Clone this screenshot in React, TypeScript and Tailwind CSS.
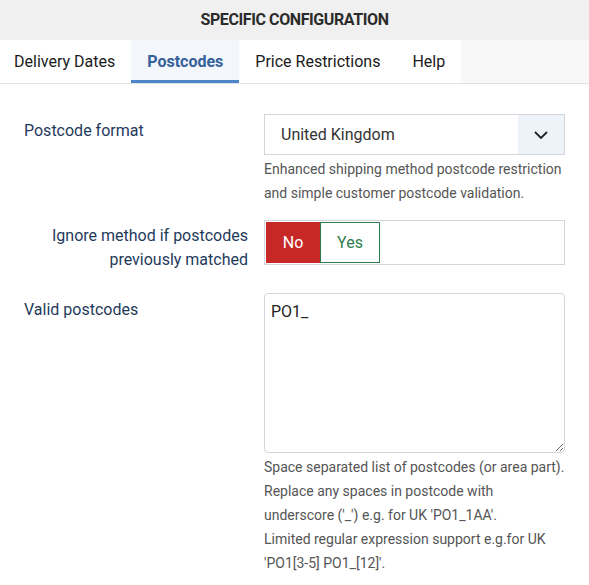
export default function App() {
  const tabs = ["Delivery Dates", "Postcodes", "Price Restrictions", "Help"];
  const active = "Postcodes";

  return (
    <div className="w-[589px] min-h-[585px] bg-white font-['Roboto','Liberation_Sans',sans-serif] text-[#212529]">
      {/* Header */}
      <div className="h-10 bg-[#f0f0f0] flex items-center justify-center">
        <h2 className="text-base font-bold text-[#2b2b2b] tracking-tight">SPECIFIC CONFIGURATION</h2>
      </div>

      {/* Tabs */}
      <div className="flex h-[44px] border-b border-[#dfe3e8]">
        {tabs.map((t) => (
          <div
            key={t}
            className={`flex items-center px-4 first:pl-[14px] text-base ${
              t === active
                ? "bg-[#f3f6fa] text-[#35609a] font-bold border-b-[3px] border-[#4a86c8] pt-[3px]"
                : "bg-white text-[#1a1a1a]"
            }`}
          >
            {t}
          </div>
        ))}
        <div className="flex-1 bg-[#f8f8f8]" />
      </div>

      {/* Form */}
      <div className="pl-6 pr-6 pt-[30px] flex flex-col">
        {/* Postcode format */}
        <div className="flex gap-4">
          <label className="w-[224px] pt-[5px] text-base text-[#1f3a5c]">Postcode format</label>
          <div className="w-[301px]">
            <div className="h-[41px] border border-[#d3d6da] flex">
              <div className="flex-1 flex items-center pl-4 text-base text-[#333]">United Kingdom</div>
              <div className="w-[46px] bg-[#eef3fa] flex items-center justify-center">
                <svg width="18" height="16" viewBox="0 0 18 16" fill="none" stroke="#222" strokeWidth="1.8">
                  <path d="M3 5l6 6 6-6" />
                </svg>
              </div>
            </div>
            <p className="mt-[2px] text-sm leading-6 text-[#555]">
              Enhanced shipping method postcode restriction and simple customer postcode validation.
            </p>
          </div>
        </div>

        {/* Ignore method */}
        <div className="flex gap-4 mt-[15px]">
          <label className="w-[224px] text-right text-base leading-6 text-[#1f3a5c] pt-[4px]">
            Ignore method if postcodes previously matched
          </label>
          <div className="w-[301px]">
            <div className="h-[45px] border border-[#d3d6da] p-px flex">
              <div className="w-[54px] bg-[#c62828] text-white flex items-center justify-center text-base">No</div>
              <div className="w-[60px] border border-[#2e7d4f] text-[#2e7d4f] flex items-center justify-center text-base">Yes</div>
            </div>
          </div>
        </div>

        {/* Valid postcodes */}
        <div className="flex gap-4 mt-[21px]">
          <label className="w-[224px] pt-[5px] text-base text-[#1f3a5c]">Valid postcodes</label>
          <div className="w-[301px]">
            <textarea
              defaultValue="PO1_"
              className="block w-full h-[160px] border border-[#d3d6da] rounded-[4px] px-[6px] py-[6px] text-base text-[#222] outline-none resize-y"
            />
            <p className="mt-[2px] text-sm leading-6 text-[#555]">
              Space separated list of postcodes (or area part).
              <br />
              Replace any spaces in postcode with underscore ('_') e.g. for UK 'PO1_1AA'.
              <br />
              Limited regular expression support e.g.for UK 'PO1[3-5] PO1_[12]'.
            </p>
          </div>
        </div>
      </div>
    </div>
  );
}
